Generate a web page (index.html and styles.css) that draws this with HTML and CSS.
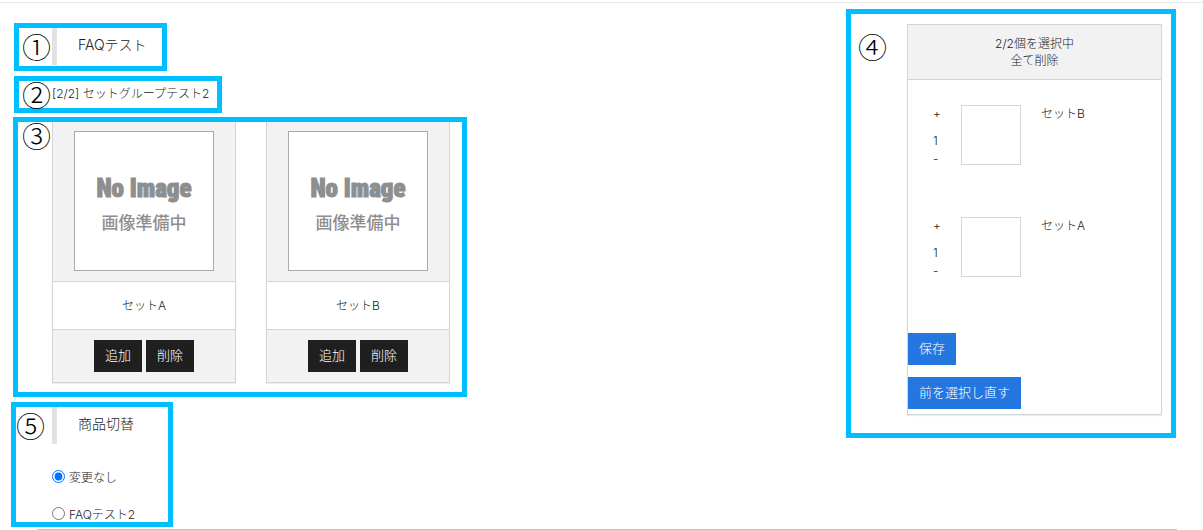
FILE: index.html
```html
<!DOCTYPE html>
<html lang="ja">
<head>
<meta charset="utf-8">
<title>FAQテスト</title>
<link rel="stylesheet" href="styles.css">
</head>
<body>
<main class="page">
  <div class="main-column">
    <section class="callout callout-title">
      <span class="number">①</span>
      <h1 class="heading">FAQテスト</h1>
    </section>
    <section class="callout callout-group">
      <span class="number">②</span>
      <p class="group-name">[2/2] セットグループテスト2</p>
    </section>
    <section class="callout callout-products">
      <span class="number">③</span>
      <div class="cards">
        <article class="card">
          <div class="card-media"><div class="no-image"><span class="no-image-en">No Image</span><span class="no-image-ja">画像準備中</span></div></div>
          <h3 class="card-name">セットA</h3>
          <div class="card-actions"><button class="button" type="button">追加</button><button class="button" type="button">削除</button></div>
        </article>
        <article class="card">
          <div class="card-media"><div class="no-image"><span class="no-image-en">No Image</span><span class="no-image-ja">画像準備中</span></div></div>
          <h3 class="card-name">セットB</h3>
          <div class="card-actions"><button class="button" type="button">追加</button><button class="button" type="button">削除</button></div>
        </article>
      </div>
    </section>
    <section class="callout callout-switch">
      <span class="number">⑤</span>
      <div class="switch">
        <h2 class="heading">商品切替</h2>
        <div class="options">
          <label class="option"><input class="radio" type="radio" name="product" checked>変更なし</label>
          <label class="option"><input class="radio" type="radio" name="product">FAQテスト2</label>
        </div>
      </div>
    </section>
  </div>
  <aside class="callout callout-selection">
    <span class="number">④</span>
    <div class="panel">
      <div class="panel-head">
        <p class="panel-count">2/2個を選択中</p>
        <button class="text-button" type="button">全て削除</button>
      </div>
      <ul class="items">
        <li class="item">
          <div class="quantity"><button class="text-button plus" type="button">+</button><span>1</span><button class="text-button" type="button">-</button></div>
          <div class="thumb"></div>
          <p class="item-name">セットB</p>
        </li>
        <li class="item">
          <div class="quantity"><button class="text-button plus" type="button">+</button><span>1</span><button class="text-button" type="button">-</button></div>
          <div class="thumb"></div>
          <p class="item-name">セットA</p>
        </li>
      </ul>
      <div class="panel-actions">
        <button class="button button-primary" type="button">保存</button>
        <button class="button button-primary" type="button">前を選択し直す</button>
      </div>
    </div>
  </aside>
</main>
<hr class="divider">
</body>
</html>
```
FILE: styles.css
```css
* {
  box-sizing: border-box;
}

body {
  margin: 0;
  padding-top: 2px;
  background: #fff;
  color: #222;
  font: 300 12px/18px Inter, "Noto Sans CJK JP", sans-serif;
}

h1, h2, h3, p, ul {
  margin: 0;
  padding: 0;
  font-weight: 300;
}

button {
  font: inherit;
  cursor: pointer;
}

.page {
  display: grid;
  grid-template-columns: 1fr 330px;
  align-items: start;
  padding: 6px 27px 0 11px;
  border-top: 1px solid #e9e9e9;
}

.main-column {
  display: flex;
  flex-direction: column;
  align-items: flex-start;
  padding-top: 14px;
}

.callout {
  display: flex;
  align-items: flex-start;
  border: 5px solid #00bfff;
}

.number {
  flex: none;
  width: 33px;
  padding-left: 3px;
  color: #000;
  font: 300 29px/30px "Noto Sans CJK JP", sans-serif;
}

.callout-title {
  width: 153px;
  height: 48px;
  margin: 0 0 5px 3px;
}

.callout-title .number {
  padding-top: 3px;
}

.callout-group {
  width: 208px;
  height: 37px;
  margin: 0 0 4px 3px;
  white-space: nowrap;
}

.callout-group .number {
  line-height: 26px;
}

.group-name {
  padding-top: 4px;
}

.callout-products {
  width: 454px;
  height: 280px;
  margin: 0 0 5px 2px;
}

.callout-products .number {
  width: 34px;
  padding-left: 4px;
  line-height: 26px;
}

.callout-switch {
  width: 162px;
  height: 125px;
}

.callout-switch .number {
  width: 36px;
  padding: 3px 0 0;
}

.heading {
  height: 37px;
  padding-left: 21px;
  border-left: 5px solid #e2e2e2;
  font-size: 14px;
  line-height: 34px;
}

.cards {
  display: flex;
  gap: 30px;
}

.card {
  width: 184px;
  border: 1px solid #d5d5d5;
  border-top: 0;
  background: #f2f2f2;
  box-shadow: 0 1px 1px #eee;
  text-align: center;
}

.card-media {
  padding: 9px 21px 10px;
}

.no-image {
  display: flex;
  flex-direction: column;
  align-items: center;
  height: 140px;
  padding-top: 40px;
  border: 1px solid #aaa;
  background: #fff;
  color: #8e8e8e;
}

.no-image-en {
  font: 900 25px/34px "Roboto Condensed", Roboto, sans-serif;
  -webkit-text-stroke: 1px #8e8e8e;
}

.no-image-ja {
  font: 500 17px/32px "Noto Sans CJK JP", sans-serif;
}

.card-name {
  border: solid #d5d5d5;
  border-width: 1px 0;
  background: #fff;
  font-size: 12px;
  line-height: 47px;
}

.card-actions {
  display: flex;
  justify-content: center;
  gap: 4px;
  padding: 10px 0;
}

.button {
  height: 32px;
  padding: 0 11px 2px;
  border: 0;
  background: #1f1f1f;
  color: #fff;
  font-size: 13px;
  line-height: 30px;
}

.switch {
  flex: 1;
}

.options {
  display: grid;
  gap: 17px;
  padding-top: 24px;
}

.option {
  display: flex;
  align-items: flex-start;
  gap: 4px;
  line-height: 20px;
}

.radio {
  width: 13px;
  height: 13px;
  margin: 2px 0 0;
}

.callout-selection {
  height: 429px;
  padding: 10px 9px 0;
}

.callout-selection .number {
  width: 47px;
  padding: 7px 0 0;
  margin-left: -2px;
}

.panel {
  flex: 1;
  margin-left: 2px;
  border: 1px solid #d5d5d5;
  box-shadow: 0 1px 1px #eee;
}

.panel-head {
  padding: 10px 0;
  border-bottom: 1px solid #d5d5d5;
  background: #f2f2f2;
  text-align: center;
  line-height: 17px;
}

.text-button {
  display: block;
  padding: 0;
  border: 0;
  background: none;
  color: inherit;
}

.panel-head .text-button {
  margin: 0 auto;
}

.items {
  display: grid;
  gap: 52px;
  padding: 25px 25px 56px;
  list-style: none;
}

.item {
  display: flex;
}

.quantity {
  display: flex;
  flex-direction: column;
  align-items: flex-start;
  width: 28px;
  height: 60px;
}

.plus {
  margin-bottom: 9px;
}

.thumb {
  width: 60px;
  height: 60px;
  border: 1px solid #d5d5d5;
}

.item-name {
  margin-left: 20px;
}

.panel-actions {
  display: flex;
  flex-direction: column;
  align-items: flex-start;
  gap: 12px;
  padding-bottom: 5px;
}

.button-primary {
  background: #2476e0;
}

.divider {
  height: 1px;
  margin: 2px 26px 0 37px;
  border: 0;
  background: #c4c4c4;
}
```
